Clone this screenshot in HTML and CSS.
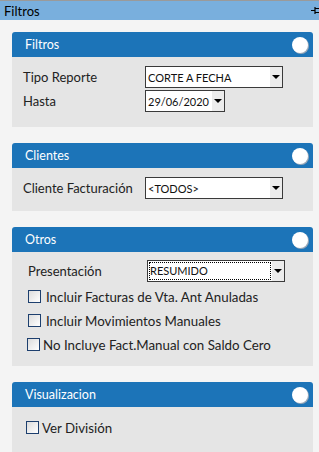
FILE: index.html
```html
<!DOCTYPE html>
<html lang="es">
<head>
    <meta charset="UTF-8">
    <meta name="viewport" content="width=device-width, initial-scale=1.0">
    <title>Filtros</title>
    <link rel="stylesheet" href="styles.css">
</head>
<body>

    <div class="titlebar">
        <span>Filtros</span>
        <svg class="pin" width="8" height="9" viewBox="0 0 8 9">
            <path d="M0 4.5H4M4 1V8M4 2.5H8M4 6.5H8" stroke="#000" stroke-width="1.2" fill="none"/>
        </svg>
    </div>

    <div class="content">
        <div class="panel">
            <div class="panel-head">
                <span>Filtros</span>
                <span class="toggle"></span>
            </div>
            <div class="panel-body first">
                <div class="field">
                    <label>Tipo Reporte</label>
                    <div class="select wide"><span>CORTE A FECHA</span><i class="arrow"></i></div>
                </div>
                <div class="field">
                    <label>Hasta</label>
                    <div class="select date"><span>29/06/2020</span><i class="arrow"></i></div>
                </div>
            </div>
        </div>

        <div class="panel">
            <div class="panel-head">
                <span>Clientes</span>
                <span class="toggle"></span>
            </div>
            <div class="panel-body second">
                <div class="field">
                    <label>Cliente Facturación</label>
                    <div class="select wide"><span>&lt;TODOS&gt;</span><i class="arrow"></i></div>
                </div>
            </div>
        </div>

        <div class="panel">
            <div class="panel-head">
                <span>Otros</span>
                <span class="toggle"></span>
            </div>
            <div class="panel-body third">
                <div class="field indent">
                    <label>Presentación</label>
                    <div class="select wide focused"><span>RESUMIDO</span><i class="arrow"></i></div>
                </div>
                <label class="check"><span class="box"></span>Incluir Facturas de Vta. Ant Anuladas</label>
                <label class="check"><span class="box"></span>Incluir Movimientos Manuales</label>
                <label class="check tight"><span class="box"></span>No Incluye Fact.Manual con Saldo Cero</label>
            </div>
        </div>

        <div class="panel">
            <div class="panel-head">
                <span>Visualizacion</span>
                <span class="toggle"></span>
            </div>
            <div class="panel-body fourth">
                <label class="check tight"><span class="box"></span>Ver División</label>
            </div>
        </div>
    </div>

</body>
</html>
```

FILE: styles.css
```css
body {
    margin: 0;
    background: #f4f4f4;
    font-family: Lato, "Liberation Sans", sans-serif;
    font-size: 13px;
    color: #222;
    overflow: hidden;
}

.titlebar {
    height: 19px;
    border-top: 1px solid #9a9a9a;
    background: #79afdd;
    display: flex;
    align-items: center;
    justify-content: space-between;
    padding-left: 4px;
    color: #000;
}

.content {
    padding: 12px 6px 0 12px;
}

.panel {
    margin-bottom: 16px;
}

.panel-head {
    height: 25px;
    background: #1c74b8;
    border-radius: 3px 3px 0 0;
    color: #fff;
    display: flex;
    align-items: center;
    justify-content: space-between;
    padding: 0 5px 0 13px;
    font-size: 12.5px;
}

.toggle {
    width: 16px;
    height: 16px;
    border-radius: 50%;
    background: #fff;
    box-shadow: 1px 1px 0 #9aa8b8;
}

.panel-body {
    background: #e5e5e5;
    padding: 0 11px;
}

.panel-body.first {
    padding-top: 9px;
    padding-bottom: 15px;
}

.panel-body.second {
    padding-top: 9px;
    padding-bottom: 12px;
}

.panel-body.third {
    padding-top: 8px;
    padding-bottom: 15px;
    padding-left: 16px;
}

.panel-body.fourth {
    padding-top: 14px;
    padding-bottom: 20px;
    padding-left: 15px;
}

.field {
    display: flex;
    align-items: center;
    height: 22px;
}

.field + .field {
    margin-top: 2px;
}

.field label {
    width: 122px;
}

.field.indent label {
    width: 119px;
}

.select {
    height: 22px;
    border: 1px solid #3a3a3a;
    background: #fff;
    display: flex;
    align-items: center;
    justify-content: space-between;
    font-size: 11px;
    color: #111;
    padding-left: 2px;
    box-sizing: border-box;
}

.select.wide {
    width: 138px;
}

.select.date {
    width: 80px;
}

.select.focused span {
    outline: 1px dotted #000;
    flex: 1;
    height: 16px;
    line-height: 16px;
    margin-right: 2px;
}

.arrow {
    width: 12px;
    height: 20px;
    background: #ececec;
    position: relative;
}

.arrow::after {
    content: "";
    position: absolute;
    left: 2px;
    top: 8px;
    border-left: 4px solid transparent;
    border-right: 4px solid transparent;
    border-top: 4px solid #000;
}

.check {
    display: flex;
    align-items: center;
    height: 13px;
    margin-top: 11px;
    gap: 5px;
    font-size: 13.3px;
}

.field + .check {
    margin-top: 8px;
}

.check.tight {
    margin-left: -1px;
    gap: 3px;
}

.panel-body.fourth .check {
    margin-top: 0;
}

.box {
    width: 11px;
    height: 11px;
    border: 1px solid #1d3f6e;
    background: linear-gradient(135deg, #dcdcdc, #fff);
}
```
